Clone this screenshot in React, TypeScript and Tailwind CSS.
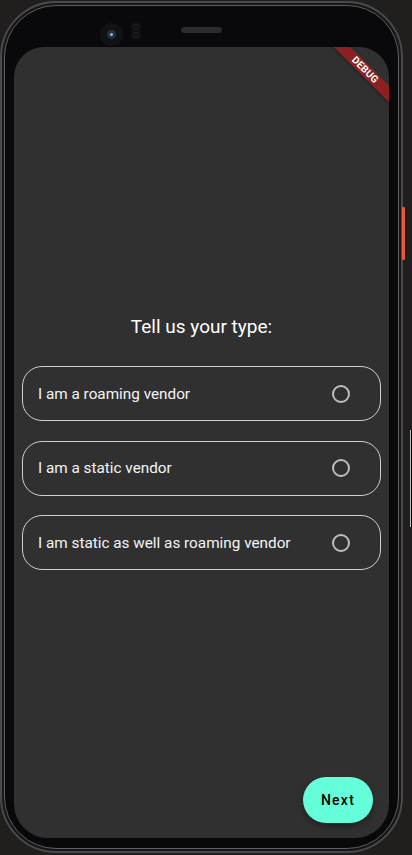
import React from 'react'

const OPTIONS = [
    'I am a roaming vendor',
    'I am a static vendor',
    'I am static as well as roaming vendor',
] as const

const RadioCard = ({ label }: { label: string }) => (
    <div className="flex h-[55px] items-center justify-between rounded-[20px] border border-[#d0d0d0] pl-[15px] pr-[30px]">
        <span className="text-[15.3px] leading-[20px] text-[#f4f4f4]">{label}</span>
        <span className="block h-[18px] w-[18px] rounded-full border-2 border-[#bdbdbd]" />
    </div>
)

const DebugBanner = () => (
    <div className="absolute left-[291px] top-[17px] flex h-[12px] w-[120px] rotate-45 items-center justify-center bg-[#8a2020] shadow-[0_1px_2px_rgba(0,0,0,0.4)]">
        <span className="text-[10px] font-bold leading-none tracking-[0.2px] text-white">DEBUG</span>
    </div>
)

export default function App() {
    return (
        <div
            className="relative h-[855px] w-[412px] overflow-hidden bg-[#201f1d]"
            style={{ fontFamily: 'Roboto, "Noto Sans", sans-serif' }}
        >
            {/* side buttons */}
            <div className="absolute left-[402px] top-[207px] h-[53px] w-[3px] rounded-[1px] bg-[#e6583f]" />
            <div className="absolute left-[410px] top-[430px] h-[97px] w-[2px] border-l border-[#bdbdbd] bg-black" />

            <div className="mt-[1px] h-[852px] w-[403px] rounded-[56px] border-2 border-[#4a4a4c] bg-[#171719] p-[2px]">
                <div className="relative h-full w-full rounded-[52px] border border-[#5e5e60] bg-[#09090b] px-[9px] pb-[10px] pt-[41px]">
                    {/* camera, sensor, speaker */}
                    <div className="absolute left-[95px] top-[17px] flex h-[23px] w-[23px] items-center justify-center rounded-full bg-[#121215]">
                        <div className="flex h-[9px] w-[9px] items-center justify-center rounded-full bg-[#253048]">
                            <div className="h-[3px] w-[3px] rounded-full bg-[#a8b4e0]" />
                        </div>
                    </div>
                    <div className="absolute left-[126px] top-[15px] flex h-[20px] w-[10px] flex-col items-center justify-around rounded-full bg-[#111113] py-[2px]">
                        <div className="h-[6px] w-[6px] rounded-full border border-[#222226]" />
                        <div className="h-[6px] w-[6px] rounded-full border border-[#222226]" />
                    </div>
                    <div className="absolute left-[176px] top-[21px] h-[6px] w-[41px] rounded-full bg-[#2b2b2d]" />

                    {/* screen */}
                    <div className="relative flex h-full w-full flex-col overflow-hidden rounded-b-[34px] rounded-t-[30px] bg-[#303030]">
                        <DebugBanner />

                        <h1 className="mt-[268px] text-center text-[19px] leading-[24px] text-white">
                            Tell us your type:
                        </h1>

                        <div className="mx-[8px] mt-[27px] flex flex-col gap-[19.5px]">
                            {OPTIONS.map((label) => (
                                <RadioCard key={label} label={label} />
                            ))}
                        </div>

                        <button
                            className="mb-[15px] mr-[16px] mt-auto flex h-[46px] w-[70px] items-center justify-center self-end rounded-full bg-[#64ffda] text-[14px] font-medium tracking-[1.25px] text-black shadow-[0_3px_6px_rgba(0,0,0,0.35)]"
                            type="button"
                        >
                            Next
                        </button>
                    </div>
                </div>
            </div>
        </div>
    )
}
